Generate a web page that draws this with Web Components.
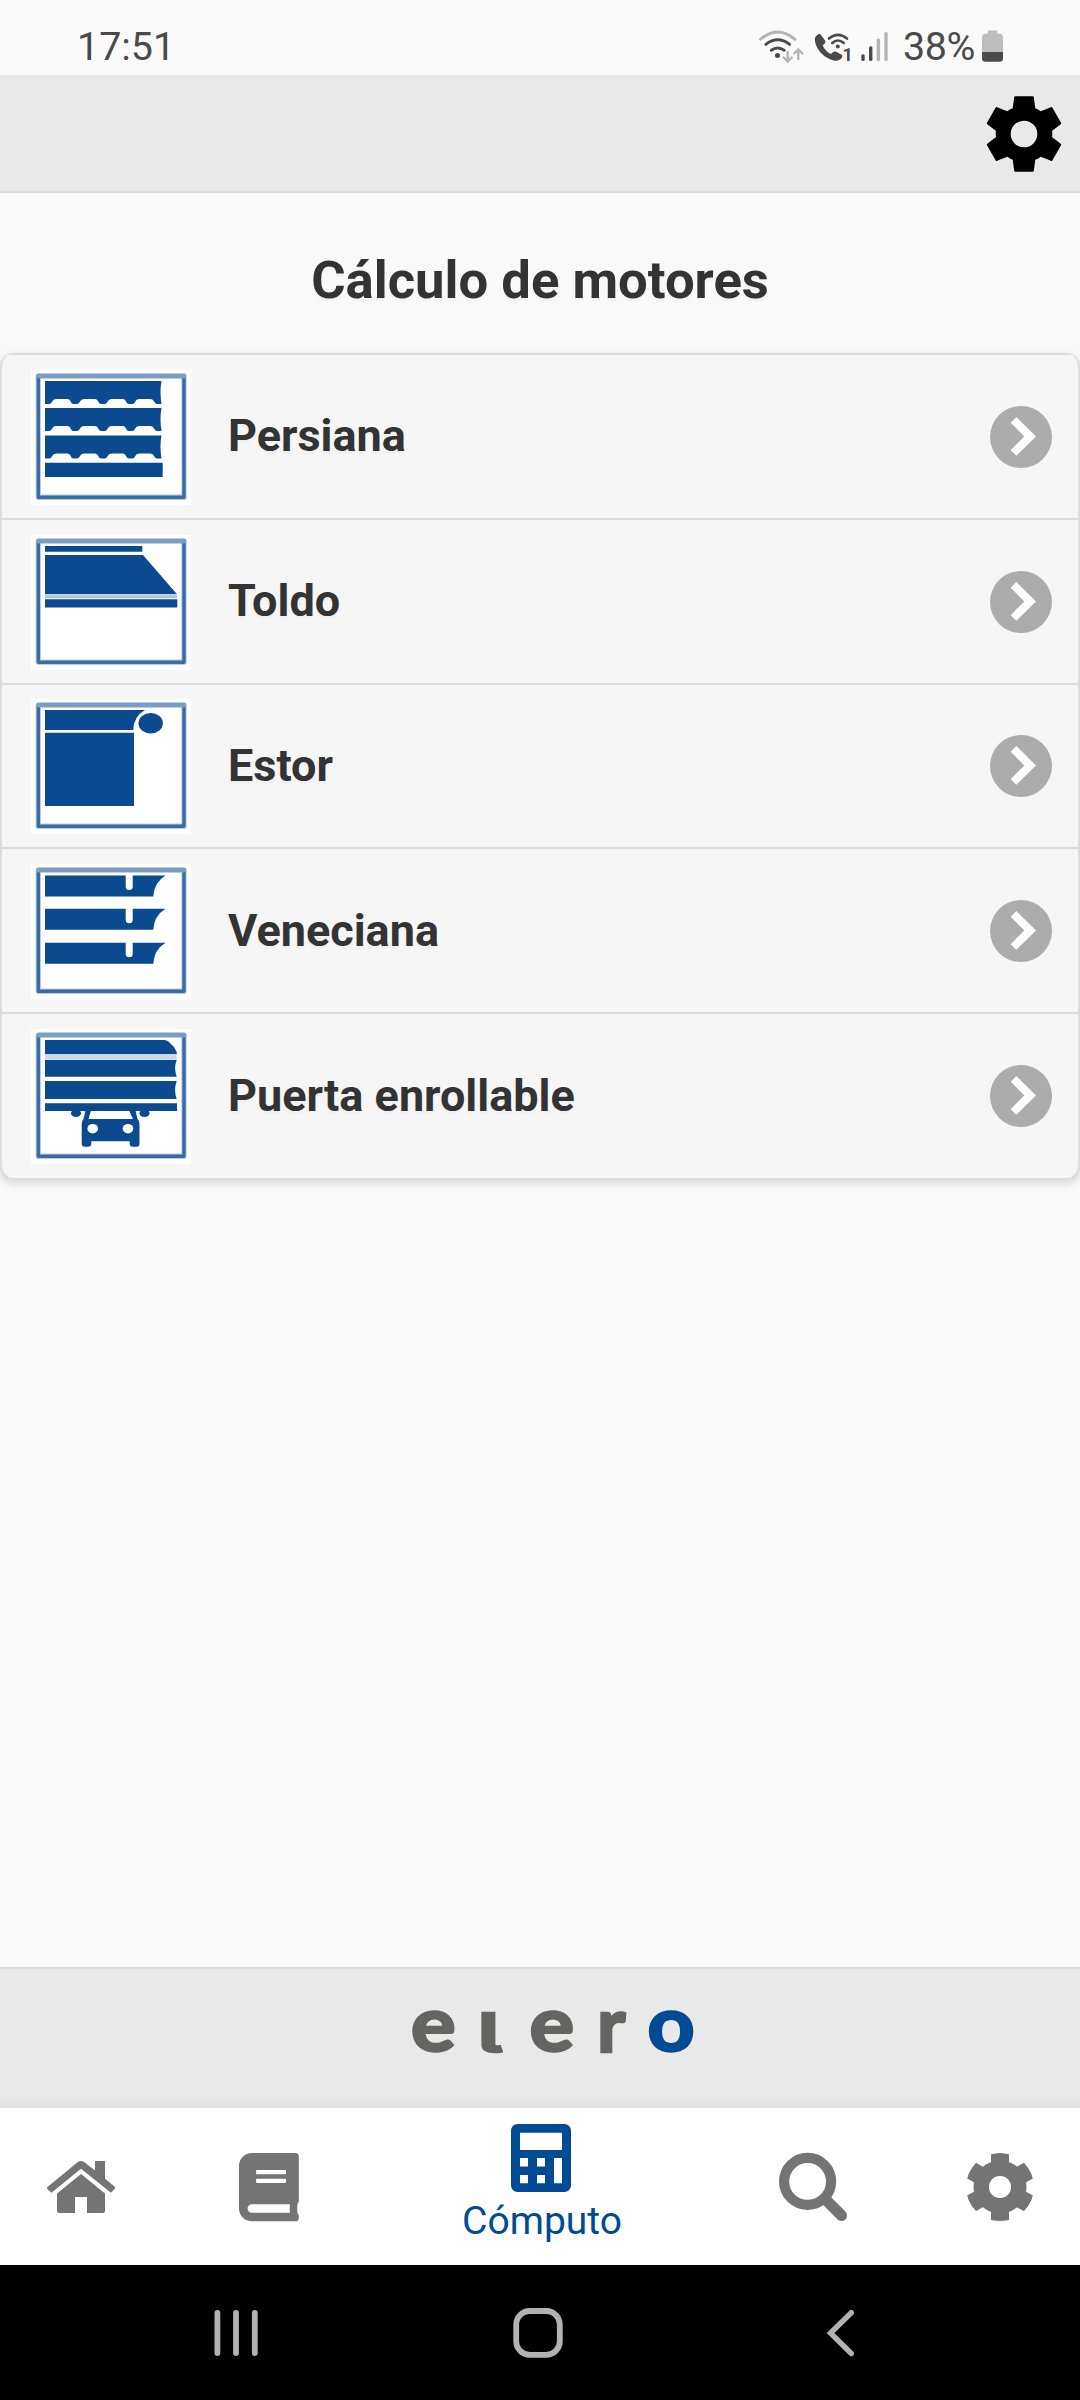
<!DOCTYPE html>
<html lang="es">
<head>
<meta charset="utf-8">
<title>elero</title>
<style>
  html, body { margin: 0; padding: 0; }
  body { width: 1080px; background: #f9f9f9; font-family: Roboto, "Liberation Sans", sans-serif; color: #333; }
</style>
</head>
<body>
<app-screen>
  <status-bar slot="top" time="17:51" battery="38%"></status-bar>
  <app-header slot="top"></app-header>
  <page-title>Cálculo de motores</page-title>
  <motor-list>
    <motor-row icon="persiana">Persiana</motor-row>
    <motor-row icon="toldo">Toldo</motor-row>
    <motor-row icon="estor">Estor</motor-row>
    <motor-row icon="veneciana">Veneciana</motor-row>
    <motor-row icon="puerta">Puerta enrollable</motor-row>
  </motor-list>
  <brand-footer slot="bottom"></brand-footer>
  <tab-bar slot="bottom">
    <tab-item icon="home"></tab-item>
    <tab-item icon="book"></tab-item>
    <tab-item icon="calc" active>Cómputo</tab-item>
    <tab-item icon="search"></tab-item>
    <tab-item icon="gear"></tab-item>
  </tab-bar>
  <system-nav slot="bottom"></system-nav>
</app-screen>

<script>
class Base extends HTMLElement {
  connectedCallback() {
    if (this.shadowRoot) return;
    const t = document.createElement('template');
    t.innerHTML = '<style>:host{display:block;box-sizing:border-box}svg{display:block;flex:none}' + this.css() + '</style>' + this.html();
    this.attachShadow({ mode: 'open' }).append(t.content.cloneNode(true));
  }
  css() { return ''; }
  html() { return '<slot></slot>'; }
}

customElements.define('app-screen', class extends Base {
  css() { return ':host{display:flex;flex-direction:column;width:1080px;height:2400px;overflow:hidden;background:#f9f9f9}main{flex:1;min-height:0}'; }
  html() { return '<slot name="top"></slot><main><slot></slot></main><slot name="bottom"></slot>'; }
});

customElements.define('status-bar', class extends Base {
  css() { return `:host{display:flex;justify-content:space-between;height:75px;padding:0 76px 0 77px;background:#fafafa;color:#4a4a4a;font-size:39.400px;line-height:47px}
    .t{padding-top:23px}.r{display:flex}.r .t{width:77px;margin-left:11px;letter-spacing:-.4px}`; }
  html() { return `<span class="t">${this.getAttribute('time')}</span>
    <div class="r">
    <svg width="134" height="75" viewBox="758 0 134 75" fill="none" stroke="#4a4a4a" stroke-width="2.9" stroke-linecap="round">
      <g stroke="#b4b4b4"><path d="M760.5 39.3Q777.7 24.5 795 39.3"/><path d="M787.7 52v9.5m-4-4 4 4 4-4M798.3 59v-9.5m-4 4 4-4 4 4" stroke-width="2.4"/></g>
      <path d="M765.8 44.3Q777.7 35.3 789.6 44.3M771.3 50.2Q777.7 45.6 784.2 50.2"/>
      <circle cx="777.5" cy="55.4" r="2.5" fill="#4a4a4a" stroke="none"/>
      <path d="M816.500 35.800c1.800-2 3.700-2.300 4.600-.6l3.900 5c1 1.500.3 3.300-2.300 5.300 2 4.200 4.800 7 8.500 8.600 2-2.700 3.600-3 5.500-2l4.500 2.400c1.700 1 1.500 2.500-.2 4.300-2.600 2.700-6.600 2.400-11.500.1-7.500-3.400-12.800-9.600-14.500-17.500-.5-2.600 0-4.300 1.500-5.600z" fill="#4a4a4a" stroke="none"/>
      <path d="M829 38.600Q838 31 847 38.600M832.200 43Q838 38 843.800 43" stroke-width="2.6"/>
      <circle cx="837.800" cy="46.400" r="2" fill="#4a4a4a" stroke="none"/>
      <text x="842.6" y="60.800" font-size="18" font-weight="700" fill="#4a4a4a" stroke="none">1</text>
      <g fill="#4a4a4a" stroke="none"><rect x="861.300" y="54.300" width="3.400" height="6.700" rx="1.500"/><rect x="869" y="46.300" width="3.400" height="14.700" rx="1.500"/></g>
      <g fill="#b4b4b4" stroke="none"><rect x="876.700" y="38.600" width="3.400" height="22.400" rx="1.500"/><rect x="884.300" y="32" width="3.400" height="29" rx="1.500"/></g>
    </svg>
    <span class="t">${this.getAttribute('battery')}</span>
    <svg width="24" height="75" viewBox="980 0 24 75"><path d="M982 52V37.500q0-3.800 3.800-3.800h2V31.500q0-1 1-1h7.500q1 0 1 1v2.200h2q3.700 0 3.700 3.800V52z" fill="#bdbdbd"/><path d="M982 52h21v6.500q0 3.200-3.500 3.200h-14q-3.500 0-3.500-3.200z" fill="#4a4a4a"/></svg>
    </div>`; }
});

/* Six-toothed cog with tapered teeth, generated around the origin. */
function cogPath() {
  let d = '';
  for (let i = 0; i < 6; i++) {
    const a = i * Math.PI / 3, c = Math.cos(a), s = Math.sin(a);
    const p = (x, y) => (x * c - y * s).toFixed(2) + ' ' + (x * s + y * c).toFixed(2);
    d += (i ? 'L' : 'M') + p(-11.3, -25.8) + 'L' + p(-9.8, -36.7) + 'Q' + p(-9.7, -37.7) + ' ' + p(-8.7, -37.7) +
      'L' + p(8.7, -37.7) + 'Q' + p(9.7, -37.7) + ' ' + p(9.8, -36.7) + 'L' + p(11.3, -25.8) + 'Q' + p(14.2, -24.8) + ' ' + p(16.6, -22.8);
  }
  return d + 'ZM13.3 0A13.3 13.3 0 1 0-13.3 0A13.3 13.3 0 1 0 13.3 0Z';
}

customElements.define('app-header', class extends Base {
  css() { return ':host{display:flex;justify-content:flex-end;align-items:center;height:118px;padding-right:16px;border-bottom:2px solid #ddd;background:#e9e9e9}'; }
  html() { return `<svg width="80" height="80" viewBox="-40 -41 80 80"><path d="${cogPath()}" fill-rule="evenodd"/></svg>`; }
});

customElements.define('page-title', class extends Base {
  css() { return ':host{height:160px;padding-top:56px;text-align:center;font-size:52.65px;line-height:62px;font-weight:700;text-shadow:0 3px 0 #f3f3f3}'; }
});

customElements.define('motor-list', class extends Base {
  css() { return ':host{border:2px solid #ddd;border-top:0;border-radius:14px;background:#f6f6f6;box-shadow:0 3px 9px rgba(0,0,0,.15);overflow:hidden}'; }
});

const B = '#0b4a8f';
const frame = '<path fill="#fff" d="M0 0h160v135H0z"/><path d="M7.300 7V127.300H153V7" fill="none" stroke="#b9cce2" stroke-width="5.400" stroke-linejoin="round"/><path d="M7.300 7V127.300H153V7" fill="none" stroke="#3a6ba3" stroke-width="3.400" stroke-linejoin="round"/><path d="M7.500 6H153" stroke="#7b9dc4" stroke-width="5" stroke-linecap="round"/>';
const slat = y => `<path d="M14 ${y}H130.500Q128.500 ${y + 11} 130.500 ${y + 23}H126Q124.500 ${y + 23} 123 ${y + 20.500}Q122.300 ${y + 18} 119.500 ${y + 18}H108Q105 ${y + 18} 104.300 ${y + 20.500}Q103.500 ${y + 23} 101 ${y + 23}H98Q96 ${y + 23} 95 ${y + 20.500}Q94.300 ${y + 18} 92 ${y + 18}H80.500Q77.500 ${y + 18} 76.700 ${y + 20.500}Q75.500 ${y + 23} 73.500 ${y + 23}H70.500Q68 ${y + 23} 67.300 ${y + 20.500}Q66.500 ${y + 18} 64 ${y + 18}H53Q50 ${y + 18} 49 ${y + 20.500}Q48 ${y + 23} 45.500 ${y + 23}H42.500Q40.500 ${y + 23} 39.700 ${y + 20.500}Q39 ${y + 18} 36.500 ${y + 18}H25Q22 ${y + 18} 21.300 ${y + 20.500}Q20 ${y + 23} 18 ${y + 23}H14z"/>`;
const blade = y => `<path d="M14 ${y}H94.700V${y + 11}a3.500 3.500 0 0 0 7 0V${y}H134.500Q123 ${y + 7} 122.300 ${y + 21}H14z"/>`;
const PICTURES = {
  persiana: slat(11) + slat(38) + slat(65.500) + '<path d="M14 92.700H131.700V107H14z"/>',
  toldo: '<path d="M14 11H111.300V16.800H14zM14 20H112L146 59.300H14zM14 64.300H146.300V72.500H14z"/><path d="M14 60.300H146.300V63.300H14z" fill="#adc3dc"/>',
  estor: '<path d="M14 11H114Q102.500 17.500 102.300 31H14zM14 33.800H103V107H14z"/><ellipse cx="119.700" cy="24.300" rx="12.200" ry="10.200"/>',
  veneciana: blade(11.500) + blade(44.700) + blade(78.700),
  puerta: '<path d="M14 11H133Q136 11 138 13Q143 17 145.700 23V25.300H14zM14 31H145.700Q142.500 39 145.700 47.700H14zM14 52H145.700Q142.500 61 145.700 70H14zM14 74.300H146V82H14z"/><path d="M14 25.500H145.700V30.800H14z" fill="#cbd9e9"/><ellipse cx="45" cy="84.300" rx="5" ry="3.800"/><ellipse cx="113.500" cy="84.300" rx="5" ry="3.800"/><path d="M54.500 81.500H60L57.500 90H102L98 81.500H104.500L106.500 90Q108.500 92 108.500 95V114.500Q108.500 117.800 105.500 117.800H102Q98.700 117.800 98.700 114.500V112.300H60.300V114.500Q60.300 117.800 57 117.800H54Q50.700 117.800 50.700 114.500V95Q50.700 92 52.500 90z"/><ellipse cx="61.700" cy="99.700" rx="5.300" ry="4.800" fill="#fff"/><ellipse cx="97" cy="99.700" rx="5.300" ry="4.800" fill="#fff"/>'
};

customElements.define('motor-row', class extends Base {
  css() { return `:host{display:flex;align-items:flex-start;height:165px;padding:15px 26px 0 29px;border-top:2px solid #ddd;font-size:45px;font-weight:700;line-height:54px;text-shadow:0 3px 0 #f1f1f1}
    :host(:nth-child(3)){height:164px;padding-top:14px}
    :host(:last-child){height:166px}
    .label{flex:1;padding:39px 0 0 37px}.go{margin-top:36px}
    :host(:nth-child(n+3)) .label{padding-top:40px}`; }
  html() { return `<svg width="160" height="135" viewBox="0 0 160 135" fill="${B}">${frame}${PICTURES[this.getAttribute('icon')]}</svg>
    <span class="label"><slot></slot></span>
    <svg class="go" width="62" height="62" viewBox="0 0 62 62"><circle cx="31" cy="31" r="31" fill="#acacac"/><path d="M26.300 11L20.700 16.700L34.300 30.500L20.700 44.200L26.300 49.800L46 30.500z" fill="#fff"/></svg>`; }
});

customElements.define('brand-footer', class extends Base {
  css() { return ':host{height:141px;padding-left:393px;border-top:2px solid #ddd;background:linear-gradient(#e9e9e9 122px,#e1e1e1 139px)}'; }
  html() { return `<svg width="320" height="139" viewBox="393 1969 320 139" fill="#646463" stroke="#646463" stroke-width="2.600" font-family="Lato, sans-serif" font-weight="700" font-size="76">
    <text transform="translate(411 2051.300) scale(1.1 1)">e</text>
    <text transform="translate(478 2051.700) scale(1.5 1)" font-family="Inter, sans-serif" font-weight="600" font-size="53" style="font-feature-settings:'cv05'">l</text>
    <text transform="translate(529.500 2051.300) scale(1.1 1)">e</text>
    <text transform="translate(597 2051.700)">r</text>
    <text transform="translate(647.500 2051.300) scale(1.08 1)" fill="#004b93" stroke="#004b93">o</text></svg>`; }
});

const TABS = {
  home: ['47 2150 68 74', '<path d="M47.600 2189.300Q46.400 2187.800 47.800 2186.700L77.500 2162.300Q81 2159.700 84.500 2162.300L95 2170.500V2161H105V2178.700L114.500 2186.600Q115.600 2187.700 114.500 2189L111 2192.700L81 2168.700L51.500 2192.700z"/><path d="M81 2174L105 2193.500V2211q0 2-2 2H87V2197H75V2213H59q-2 0-2-2V2193.500z"/>'],
  book: ['239 2150 60 74', '<g transform="translate(239 2153) scale(.1335)"><path d="M448 360V24c0-13.300-10.700-24-24-24H96C43 0 0 43 0 96v320c0 53 43 96 96 96h328c13.300 0 24-10.700 24-24v-16c0-7.500-3.500-14.300-8.900-18.700-4.200-15.400-4.200-59.300 0-74.700 5.400-4.300 8.900-11.100 8.900-18.600zM128 134c0-3.300 2.700-6 6-6h212c3.300 0 6 2.700 6 6v20c0 3.300-2.700 6-6 6H134c-3.300 0-6-2.700-6-6v-20zm0 64c0-3.300 2.700-6 6-6h212c3.300 0 6 2.700 6 6v20c0 3.300-2.700 6-6 6H134c-3.300 0-6-2.700-6-6v-20zm253.400 250H96c-17.700 0-32-14.300-32-32 0-17.600 14.400-32 32-32h285.400c-1.900 17.100-1.900 46.900 0 64z"/></g>'],
  calc: ['511 2124 60 68', '<rect x="511" y="2124" width="60" height="68" rx="6.500"/><g fill="#fff"><path d="M520 2132.700h42v17.300h-42zM520 2158h8v8.500h-8zM537 2158h8v8.500h-8zM554 2158h8v25.200h-8zM520 2175h8v8.300h-8zM537 2175h8v8.300h-8z"/></g>'],
  search: ['779 2150 68 74', '<g fill="none" stroke="#747474"><circle cx="807.600" cy="2181.400" r="23.500" stroke-width="10.200"/><path d="M826 2200L841.500 2215.500" stroke-width="11" stroke-linecap="round"/></g>'],
  gear: ['966 2150 68 74', '<mask id="m" maskUnits="userSpaceOnUse" x="960" y="2150" width="80" height="80"><circle cx="1000" cy="2187" r="34" fill="#fff"/><circle cx="1000" cy="2187" r="11.100" fill="#000"/></mask><g mask="url(#m)"><circle cx="1000" cy="2187" r="26.500"/><path d="M991 2150h18v74h-18z"/><path d="M991 2150h18v74h-18z" transform="rotate(60 1000 2187)"/><path d="M991 2150h18v74h-18z" transform="rotate(120 1000 2187)"/></g>']
};

customElements.define('tab-bar', class extends Base {
  css() { return ':host{display:flex;height:157px;background:#fff}'; }
});

customElements.define('tab-item', class extends Base {
  css() {
    return `:host{display:flex;flex-direction:column;align-items:center;flex:0 0 214px;padding-top:42px;color:#747474}
    :host([active]){flex-basis:330px;padding-top:16px;color:#004b93;font-size:39px;line-height:46px}
    :host([icon=home]){flex-basis:162px}:host([icon=gear]){flex-basis:160px}
    .label{padding:6px 0 0 2px}`; }
  html() {
    const [box, body] = TABS[this.getAttribute('icon')], [, , w, h] = box.split(' ');
    return `<svg width="${w}" height="${h}" viewBox="${box}" fill="currentColor">${body}</svg>` + (this.hasAttribute('active') ? '<span class="label"><slot></slot></span>' : '');
  }
});

customElements.define('system-nav', class extends Base {
  css() { return ':host{display:flex;align-items:flex-start;height:135px;padding:40px 0 0 211px;background:#000}.home{margin:0 257px 0 249px}'; }
  html() { return `<svg width="50" height="60" viewBox="211 2305 50 60" stroke="#b2b2b2" stroke-width="5.800" stroke-linecap="round"><path d="M217.400 2313v40M236 2313v40M254.800 2313v40"/></svg>
    <svg class="home" width="56" height="60" viewBox="510 2305 56 60" fill="none" stroke="#b2b2b2" stroke-width="5.800"><rect x="516.200" y="2311" width="43.600" height="43.800" rx="13.500"/></svg>
    <svg width="34" height="60" viewBox="823 2305 34 60" fill="none" stroke="#b2b2b2" stroke-width="5.400" stroke-linecap="round"><path d="M851.300 2312.700L830.500 2333L851.300 2353.500"/></svg>`; }
});
</script>
</body>
</html>
